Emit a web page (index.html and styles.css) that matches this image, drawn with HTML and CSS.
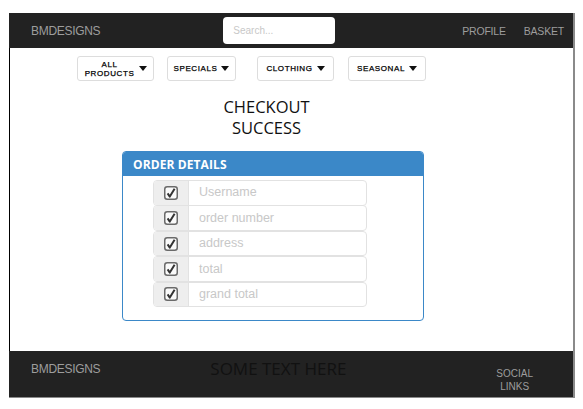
FILE: index.html
```html
<!DOCTYPE html>
<html>
<head>
<meta charset="utf-8">
<link rel="stylesheet" href="styles.css">
</head>
<body>
<div class="frame">
  <header class="topbar">
    <div class="brand">BMDESIGNS</div>
    <div class="search-wrap"><input class="search" type="text" placeholder="Search..."></div>
    <nav class="toplinks"><span>PROFILE</span><span>BASKET</span></nav>
  </header>
  <main class="content">
    <div class="menus">
      <div class="cell"><button class="drop w77"><span class="lbl narrow">ALL PRODUCTS</span><span class="caret"></span></button></div>
      <div class="cell"><button class="drop w69"><span class="lbl">SPECIALS</span><span class="caret"></span></button></div>
      <div class="cell"><button class="drop w77"><span class="lbl">CLOTHING</span><span class="caret"></span></button></div>
      <div class="cell"><button class="drop w78"><span class="lbl">SEASONAL</span><span class="caret"></span></button></div>
    </div>
    <h1 class="title">CHECKOUT<br>SUCCESS</h1>
    <section class="panel">
      <div class="panel-head">ORDER DETAILS</div>
      <div class="panel-body">
        <div class="group"><span class="addon"><svg class="cb" viewBox="0 0 14 14"><rect x="0.75" y="0.75" width="12.5" height="12.5" rx="2.5" fill="#fafafa" stroke="#6a6a6a" stroke-width="1.5"/><path d="M3.6 7.4 L5.8 10.6 L10.6 2.8" fill="none" stroke="#333" stroke-width="2" stroke-linejoin="round"/></svg></span><span class="field">Username</span></div>
        <div class="group"><span class="addon"><svg class="cb" viewBox="0 0 14 14"><rect x="0.75" y="0.75" width="12.5" height="12.5" rx="2.5" fill="#fafafa" stroke="#6a6a6a" stroke-width="1.5"/><path d="M3.6 7.4 L5.8 10.6 L10.6 2.8" fill="none" stroke="#333" stroke-width="2" stroke-linejoin="round"/></svg></span><span class="field">order number</span></div>
        <div class="group"><span class="addon"><svg class="cb" viewBox="0 0 14 14"><rect x="0.75" y="0.75" width="12.5" height="12.5" rx="2.5" fill="#fafafa" stroke="#6a6a6a" stroke-width="1.5"/><path d="M3.6 7.4 L5.8 10.6 L10.6 2.8" fill="none" stroke="#333" stroke-width="2" stroke-linejoin="round"/></svg></span><span class="field">address</span></div>
        <div class="group"><span class="addon"><svg class="cb" viewBox="0 0 14 14"><rect x="0.75" y="0.75" width="12.5" height="12.5" rx="2.5" fill="#fafafa" stroke="#6a6a6a" stroke-width="1.5"/><path d="M3.6 7.4 L5.8 10.6 L10.6 2.8" fill="none" stroke="#333" stroke-width="2" stroke-linejoin="round"/></svg></span><span class="field">total</span></div>
        <div class="group"><span class="addon"><svg class="cb" viewBox="0 0 14 14"><rect x="0.75" y="0.75" width="12.5" height="12.5" rx="2.5" fill="#fafafa" stroke="#6a6a6a" stroke-width="1.5"/><path d="M3.6 7.4 L5.8 10.6 L10.6 2.8" fill="none" stroke="#333" stroke-width="2" stroke-linejoin="round"/></svg></span><span class="field">grand total</span></div>
      </div>
    </section>
  </main>
  <footer class="foot">
    <div class="brand foot-brand">BMDESIGNS</div>
    <div class="foot-text">SOME TEXT HERE</div>
    <div class="social">SOCIAL<br>LINKS</div>
  </footer>
</div>
</body>
</html>
```

FILE: styles.css
```css
* { box-sizing: border-box; }
html, body { margin: 0; padding: 0; background: #fff; }
body { font-family: "Liberation Sans", Arial, sans-serif; }

.frame {
  margin: 13px 0 0 9px;
  width: 566px;
  border-right: 2px solid #8a8a8a;
  display: flex;
  flex-direction: column;
}

.topbar {
  height: 35px;
  background: #222;
  display: flex;
  align-items: center;
  padding: 0 9px 0 22px;
}
.brand {
  color: #9d9d9d;
  font-size: 12px;
  letter-spacing: -0.3px;
}
.search-wrap { margin-left: 123px; display: flex; }
.search {
  width: 112px;
  height: 27px;
  border: none;
  border-radius: 4px;
  background: #fff;
  padding: 0 10px;
  font-family: "Liberation Sans", Arial, sans-serif;
  font-size: 10px;
  outline: none;
}
.search::placeholder { color: #c8c8c8; }
.toplinks {
  margin-left: auto;
  display: flex;
  gap: 18px;
  color: #9d9d9d;
  font-size: 10.5px;
  letter-spacing: -0.2px;
}

.content {
  height: 303px;
  border-left: 1px solid #000;
  display: flex;
  flex-direction: column;
}

.menus {
  display: grid;
  grid-template-columns: 90px 90px 91px 90px;
  padding: 8px 0 0 67px;
}
.drop {
  height: 25px;
  border: 1px solid #ddd;
  border-radius: 3px;
  background: #fff;
  display: flex;
  align-items: center;
  justify-content: center;
  gap: 4px;
  padding: 0;
  font-family: "Liberation Sans", Arial, sans-serif;
  font-size: 8px;
  font-weight: normal;
  color: #000;
  letter-spacing: 0.6px;
  line-height: 9px;
  -webkit-text-stroke: 0.25px #000;
}
.w69 { width: 69px; }
.w77 { width: 77px; }
.w78 { width: 78px; }
.lbl { display: block; text-align: center; }
.lbl.narrow { width: 50px; }
.caret {
  width: 0; height: 0;
  border-left: 4px solid transparent;
  border-right: 4px solid transparent;
  border-top: 5px solid #111;
}

.title {
  margin: 15px 0 0;
  text-align: center;
  font-family: "Open Sans", "Noto Sans", sans-serif;
  font-weight: normal;
  font-size: 16.5px;
  line-height: 21px;
  color: #111;
  padding-right: 50px;
}

.panel {
  margin: 13px 0 0 112px;
  width: 302px;
  border: 1px solid #3b88c8;
  border-radius: 4px;
  overflow: hidden;
}
.panel-head {
  background: #3b88c8;
  color: #fff;
  height: 24px;
  padding: 0 10px;
  display: flex;
  align-items: center;
  font-family: "Open Sans", "Noto Sans", sans-serif;
  font-weight: bold;
  font-size: 12px;
  letter-spacing: 0.1px;
}
.panel-body {
  padding: 4px 0 13px 30px;
  display: flex;
  flex-direction: column;
}
.group {
  width: 214px;
  height: 25.6px;
  display: flex;
  border: 1px solid #e2e2e2;
  border-radius: 4px;
  overflow: hidden;
  background: #fff;
}
.group + .group { margin-top: -0.2px; }
.addon {
  width: 35px;
  background: #eee;
  border-right: 1px solid #e2e2e2;
  display: flex;
  align-items: center;
  justify-content: center;
}
.cb { width: 14px; height: 14px; display: block; }
.field {
  padding-left: 10px;
  padding-bottom: 1px;
  display: flex;
  align-items: center;
  color: #c8c8c8;
  font-size: 12.5px;
}

.foot {
  height: 47px;
  background: #222;
  border-bottom: 1px solid #8a8a8a;
  display: flex;
  align-items: flex-start;
  padding-left: 22px;
}
.foot-brand { margin-top: 11px; }
.foot-text {
  margin: 6px 0 0 110px;
  font-family: "Open Sans", "Noto Sans", sans-serif;
  font-size: 17px;
  color: #111;
}
.social {
  margin: 16px 0 0 150px;
  color: #9d9d9d;
  font-size: 10px;
  line-height: 13px;
  text-align: center;
}
```
